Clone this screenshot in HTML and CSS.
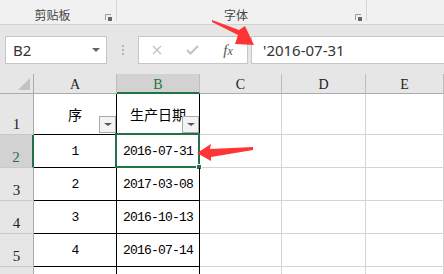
FILE: index.html
```html
<!DOCTYPE html>
<html lang="zh-CN">
<head>
    <meta charset="UTF-8">
    <title>生产日期</title>
    <link rel="stylesheet" href="styles.css">
</head>
<body>
<div class="ribbon">
    <div class="group group-clip">
        <span class="group-name">剪贴板</span>
        <svg class="launcher" width="7" height="7" viewBox="0 0 7 7">
            <path d="M0.5 6V0.5H6" fill="none" stroke="#9a9a9a"/>
            <rect x="3" y="3" width="4" height="4" fill="#666"/>
        </svg>
    </div>
    <div class="group group-font">
        <span class="group-name">字体</span>
        <svg class="launcher" width="7" height="7" viewBox="0 0 7 7">
            <path d="M0.5 6V0.5H6" fill="none" stroke="#9a9a9a"/>
            <rect x="3" y="3" width="4" height="4" fill="#666"/>
        </svg>
    </div>
</div>

<div class="formula-bar">
    <div class="name-box">
        <span>B2</span>
        <span class="caret"></span>
    </div>
    <div class="grip"><i></i><i></i><i></i></div>
    <div class="fx-buttons">
        <span class="fx-slot">
            <svg width="10" height="10" viewBox="0 0 10 10"><path d="M1 1L9 9M9 1L1 9" stroke="#c4c4c4" stroke-width="1.4"/></svg>
        </span>
        <span class="fx-slot">
            <svg width="13" height="10" viewBox="0 0 13 10"><path d="M1 5L4.5 8.5L12 1" fill="none" stroke="#c4c4c4" stroke-width="2"/></svg>
        </span>
        <span class="fx-slot fx-label"><i>f</i><i>x</i></span>
    </div>
    <div class="formula-input">'2016-07-31</div>
</div>

<div class="sheet">
    <div class="corner"><span class="corner-mark"></span></div>
    <div class="ch">A</div>
    <div class="ch ch-on">B</div>
    <div class="ch">C</div>
    <div class="ch">D</div>
    <div class="ch">E</div>

    <div class="rh">1</div>
    <div class="t t-head">序<span class="filter"></span></div>
    <div class="t t-head">生产日期<span class="filter"></span></div>
    <div class="c"></div>
    <div class="c"></div>
    <div class="c"></div>

    <div class="rh rh-on">2</div>
    <div class="t">1</div>
    <div class="t t-sel">2016-07-31<span class="sel-box"><span class="handle"></span></span></div>
    <div class="c"></div>
    <div class="c"></div>
    <div class="c"></div>

    <div class="rh">3</div>
    <div class="t">2</div>
    <div class="t">2017-03-08</div>
    <div class="c"></div>
    <div class="c"></div>
    <div class="c"></div>

    <div class="rh">4</div>
    <div class="t">3</div>
    <div class="t">2016-10-13</div>
    <div class="c"></div>
    <div class="c"></div>
    <div class="c"></div>

    <div class="rh">5</div>
    <div class="t">4</div>
    <div class="t">2016-07-14</div>
    <div class="c"></div>
    <div class="c"></div>
    <div class="c"></div>

    <div class="rh"></div>
    <div class="t"></div>
    <div class="t"></div>
    <div class="c"></div>
    <div class="c"></div>
    <div class="c"></div>
</div>

<svg class="marks" width="444" height="274" viewBox="0 0 444 274">
    <polygon points="212,20 239,30 245,26 254,45 235,44 238,35 212,22" fill="#ff3535"/>
    <polygon points="197,153 211,144 210,149 253,147 253,150 211,157 211,161" fill="#ff3535"/>
</svg>
</body>
</html>
```

FILE: styles.css
```css
* {
    margin: 0;
    padding: 0;
    box-sizing: border-box;
}

body {
    position: relative;
    width: 444px;
    height: 274px;
    overflow: hidden;
    background-color: #e6e6e6;
    font-family: "Noto Sans", "Noto Sans CJK SC", sans-serif;
    color: #333;
}

/* ribbon */
.ribbon {
    display: flex;
    height: 25px;
    background-color: #f1f1f1;
    border-bottom: 1px solid #d2d2d2;
}

.group {
    display: flex;
    height: 21px;
    padding-top: 10px;
    border-right: 1px solid #d6d6d6;
}

.group-clip {
    width: 117px;
}

.group-font {
    width: 250px;
}

.group-name {
    flex: 1;
    text-align: center;
    font-size: 12px;
    line-height: 11px;
    color: #444;
}

.launcher {
    align-self: flex-end;
    margin-right: 4px;
}

/* formula bar */
.formula-bar {
    display: flex;
    height: 49px;
    padding: 11px 0 10px 5px;
}

.name-box {
    display: flex;
    align-items: center;
    justify-content: space-between;
    width: 102px;
    padding: 0 6px 0 7px;
    background-color: #fff;
    border: 1px solid #c6c6c6;
    font-size: 15px;
}

.caret {
    border: 4px solid transparent;
    border-top: 4px solid #666;
    border-bottom: 0;
    width: 0;
    height: 0;
}

.grip {
    display: flex;
    flex-direction: column;
    align-items: center;
    justify-content: center;
    gap: 2px;
    width: 31px;
}

.grip i {
    width: 2px;
    height: 2px;
    background-color: #b4b4b4;
}

.fx-buttons {
    display: flex;
    width: 110px;
    background-color: #fff;
    border: 1px solid #c6c6c6;
}

.fx-slot {
    display: flex;
    align-items: center;
    justify-content: center;
    width: 36px;
}

.fx-slot:nth-child(2) {
    width: 35px;
}

.fx-label {
    font-family: "Liberation Serif", serif;
    font-size: 15px;
    color: #555;
}

.fx-label i:last-child {
    font-size: 12px;
    margin-top: 3px;
}

.formula-input {
    flex: 1;
    margin-left: 3px;
    padding-left: 11px;
    background-color: #fff;
    border: 1px solid #c6c6c6;
    border-right: 0;
    font-size: 15px;
    line-height: 26px;
}

/* sheet */
.sheet {
    display: grid;
    grid-template-columns: 34px 83px 83px 82px 84px 1fr;
    grid-template-rows: 20px 41px repeat(5, 33px);
    height: 200px;
    overflow: hidden;
    background-color: #fff;
    font-family: "Liberation Mono", "Noto Sans CJK SC", monospace;
    color: #000;
}

.corner {
    display: flex;
    align-items: flex-end;
    justify-content: flex-end;
    padding: 0 3px 3px 0;
    background-color: #e6e6e6;
    border-right: 1px solid #ababab;
    border-bottom: 1px solid #ababab;
}

.corner-mark {
    width: 0;
    height: 0;
    border-left: 12px solid transparent;
    border-bottom: 12px solid #c2c2c2;
}

.ch {
    background-color: #e6e6e6;
    border-right: 1px solid #bdbdbd;
    border-bottom: 1px solid #ababab;
    text-align: center;
    font-family: "Liberation Serif", serif;
    font-size: 14px;
    line-height: 21px;
    color: #222;
}

.ch-on {
    background-color: #d2d2d2;
    border-bottom: 2px solid #217346;
    color: #217346;
}

.rh {
    display: flex;
    align-items: flex-end;
    justify-content: center;
    padding-bottom: 2px;
    background-color: #e6e6e6;
    border-right: 1px solid #ababab;
    border-bottom: 1px solid #c9c9c9;
    font-family: "Liberation Serif", serif;
    font-size: 15px;
    line-height: 15px;
    color: #222;
}

.rh-on {
    background-color: #d2d2d2;
    border-right: 2px solid #217346;
    color: #217346;
}

.c {
    border-right: 1px solid #d4d4d4;
    border-bottom: 1px solid #d4d4d4;
}

.t {
    position: relative;
    display: flex;
    align-items: center;
    justify-content: center;
    border-right: 1px solid #000;
    border-bottom: 1px solid #000;
    font-size: 13px;
    letter-spacing: -0.8px;
}

.t-head {
    font-family: "Noto Sans CJK SC", sans-serif;
    font-size: 14px;
    letter-spacing: 0;
}

.filter {
    position: absolute;
    right: 0;
    bottom: 1px;
    width: 17px;
    height: 17px;
    background-color: #f3f3f3;
    border: 1px solid #a8a8a8;
}

.filter::after {
    content: "";
    position: absolute;
    top: 6px;
    left: 4px;
    border: 3px solid transparent;
    border-top: 3px solid #555;
    border-bottom: 0;
    border-left-width: 4px;
    border-right-width: 4px;
}

.sel-box {
    position: absolute;
    top: -2px;
    left: -2px;
    right: -1px;
    bottom: -1px;
    border: 2px solid #217346;
}

.handle {
    position: absolute;
    right: -4px;
    bottom: -4px;
    width: 6px;
    height: 6px;
    background-color: #217346;
    border: 1px solid #fff;
}

.marks {
    position: absolute;
    top: 0;
    left: 0;
    pointer-events: none;
}
```
